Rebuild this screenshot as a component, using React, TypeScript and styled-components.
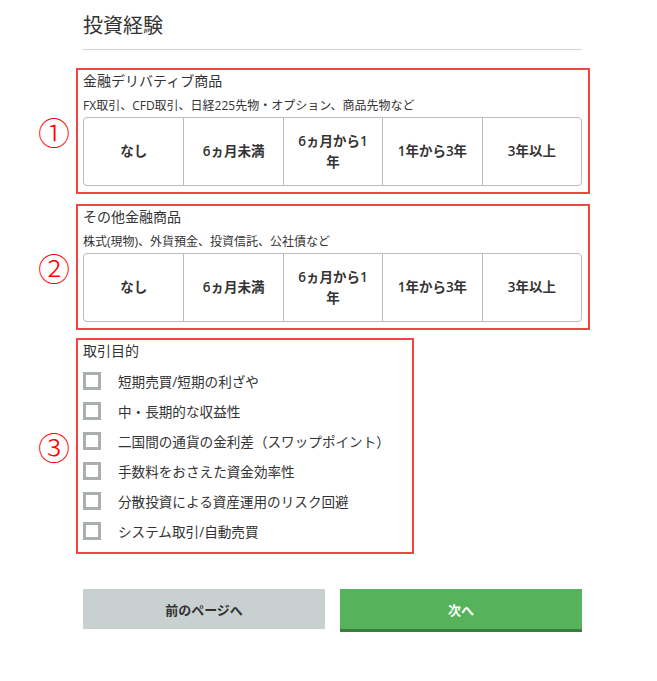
import styled, { createGlobalStyle } from "styled-components";

const GlobalStyle = createGlobalStyle`
  body {
    margin: 0;
    background: #fff;
    font-family: "Open Sans", "Noto Sans CJK JP", sans-serif;
    color: #333;
  }
`;

const S = {
  Page: styled.div`
    width: 499px;
    margin-left: 83px;
    padding-top: 12px;
    padding-bottom: 40px;
  `,
  Heading: styled.h1`
    margin: 0;
    font-size: 20px;
    line-height: 28px;
    font-weight: 400;
    padding-bottom: 9px;
    border-bottom: 1px solid #d4d4d4;
  `,
  Annotated: styled.section<{ $fit?: boolean; $top: number }>`
    position: relative;
    box-sizing: border-box;
    margin: ${p => p.$top}px 0 0 -7px;
    border: 2px solid #f44545;
    padding: 0 ${p => (p.$fit ? 22 : 6)}px 6px 5px;
    width: ${p => (p.$fit ? "max-content" : "514px")};
  `,
  Marker: styled.span`
    position: absolute;
    right: calc(100% + 8px);
    top: 50%;
    transform: translateY(-50%);
    color: #f00;
    font-size: 32px;
    line-height: 1;
    font-family: "Noto Sans CJK JP", sans-serif;
    font-weight: 300;
  `,
  Title: styled.div`
    font-size: 14px;
    line-height: 22px;
  `,
  Note: styled.div`
    margin-top: 5px;
    font-size: 12px;
    line-height: 18px;
  `,
  Segments: styled.div`
    margin-top: 2px;
    display: grid;
    grid-template-columns: repeat(5, 1fr);
    height: 69px;
    border: 1px solid #bcbcbc;
    border-radius: 4px;
    box-sizing: border-box;
  `,
  Segment: styled.div`
    display: flex;
    align-items: center;
    justify-content: center;
    text-align: center;
    padding: 0 12px;
    font-size: 13.5px;
    line-height: 21px;
    font-weight: 600;
    & + & {
      border-left: 1px solid #bcbcbc;
    }
  `,
  Options: styled.div`
    padding-top: 4px;
  `,
  Option: styled.label`
    display: flex;
    align-items: center;
    gap: 17px;
    height: 30px;
    font-size: 13.6px;
  `,
  Box: styled.span`
    width: 18px;
    height: 18px;
    box-sizing: border-box;
    border: 3px solid #aab0b0;
    background: #fff;
  `,
  Actions: styled.div`
    margin-top: 35px;
    display: grid;
    grid-template-columns: 1fr 1fr;
    gap: 15px;
    align-items: start;
  `,
  Button: styled.button<{ $primary?: boolean }>`
    height: ${p => (p.$primary ? 43 : 40)}px;
    border: 0;
    border-bottom: ${p => (p.$primary ? "3px solid #3b7f3f" : "0")};
    background: ${p => (p.$primary ? "#56b35c" : "#c8d0d0")};
    color: ${p => (p.$primary ? "#fff" : "#333")};
    font-family: inherit;
    font-size: 13px;
    font-weight: 700;
    cursor: pointer;
  `,
} as const;

const periods = ["なし", "6ヵ月未満", "6ヵ月から1年", "1年から3年", "3年以上"];

const purposes = [
  "短期売買/短期の利ざや",
  "中・長期的な収益性",
  "二国間の通貨の金利差（スワップポイント）",
  "手数料をおさえた資金効率性",
  "分散投資による資産運用のリスク回避",
  "システム取引/自動売買",
];

const ExperienceBlock: React.FC<{ mark: string; title: string; note: string; top: number }> = ({ mark, title, note, top }) => (
  <S.Annotated $top={top}>
    <S.Marker>{mark}</S.Marker>
    <S.Title>{title}</S.Title>
    <S.Note>{note}</S.Note>
    <S.Segments>
      {periods.map(p => <S.Segment key={p}>{p}</S.Segment>)}
    </S.Segments>
  </S.Annotated>
);

const App: React.FC = () => (
  <S.Page>
    <GlobalStyle />
    <S.Heading>投資経験</S.Heading>

    <ExperienceBlock
      top={18}
      mark="①"
      title="金融デリバティブ商品"
      note="FX取引、CFD取引、日経225先物・オプション、商品先物など"
    />
    <ExperienceBlock
      top={10}
      mark="②"
      title="その他金融商品"
      note="株式(現物)、外貨預金、投資信託、公社債など"
    />

    <S.Annotated $top={8} $fit>
      <S.Marker>③</S.Marker>
      <S.Title>取引目的</S.Title>
      <S.Options>
        {purposes.map(p => (
          <S.Option key={p}>
            <S.Box />
            {p}
          </S.Option>
        ))}
      </S.Options>
    </S.Annotated>

    <S.Actions>
      <S.Button>前のページへ</S.Button>
      <S.Button $primary>次へ</S.Button>
    </S.Actions>
  </S.Page>
);

export default App;
